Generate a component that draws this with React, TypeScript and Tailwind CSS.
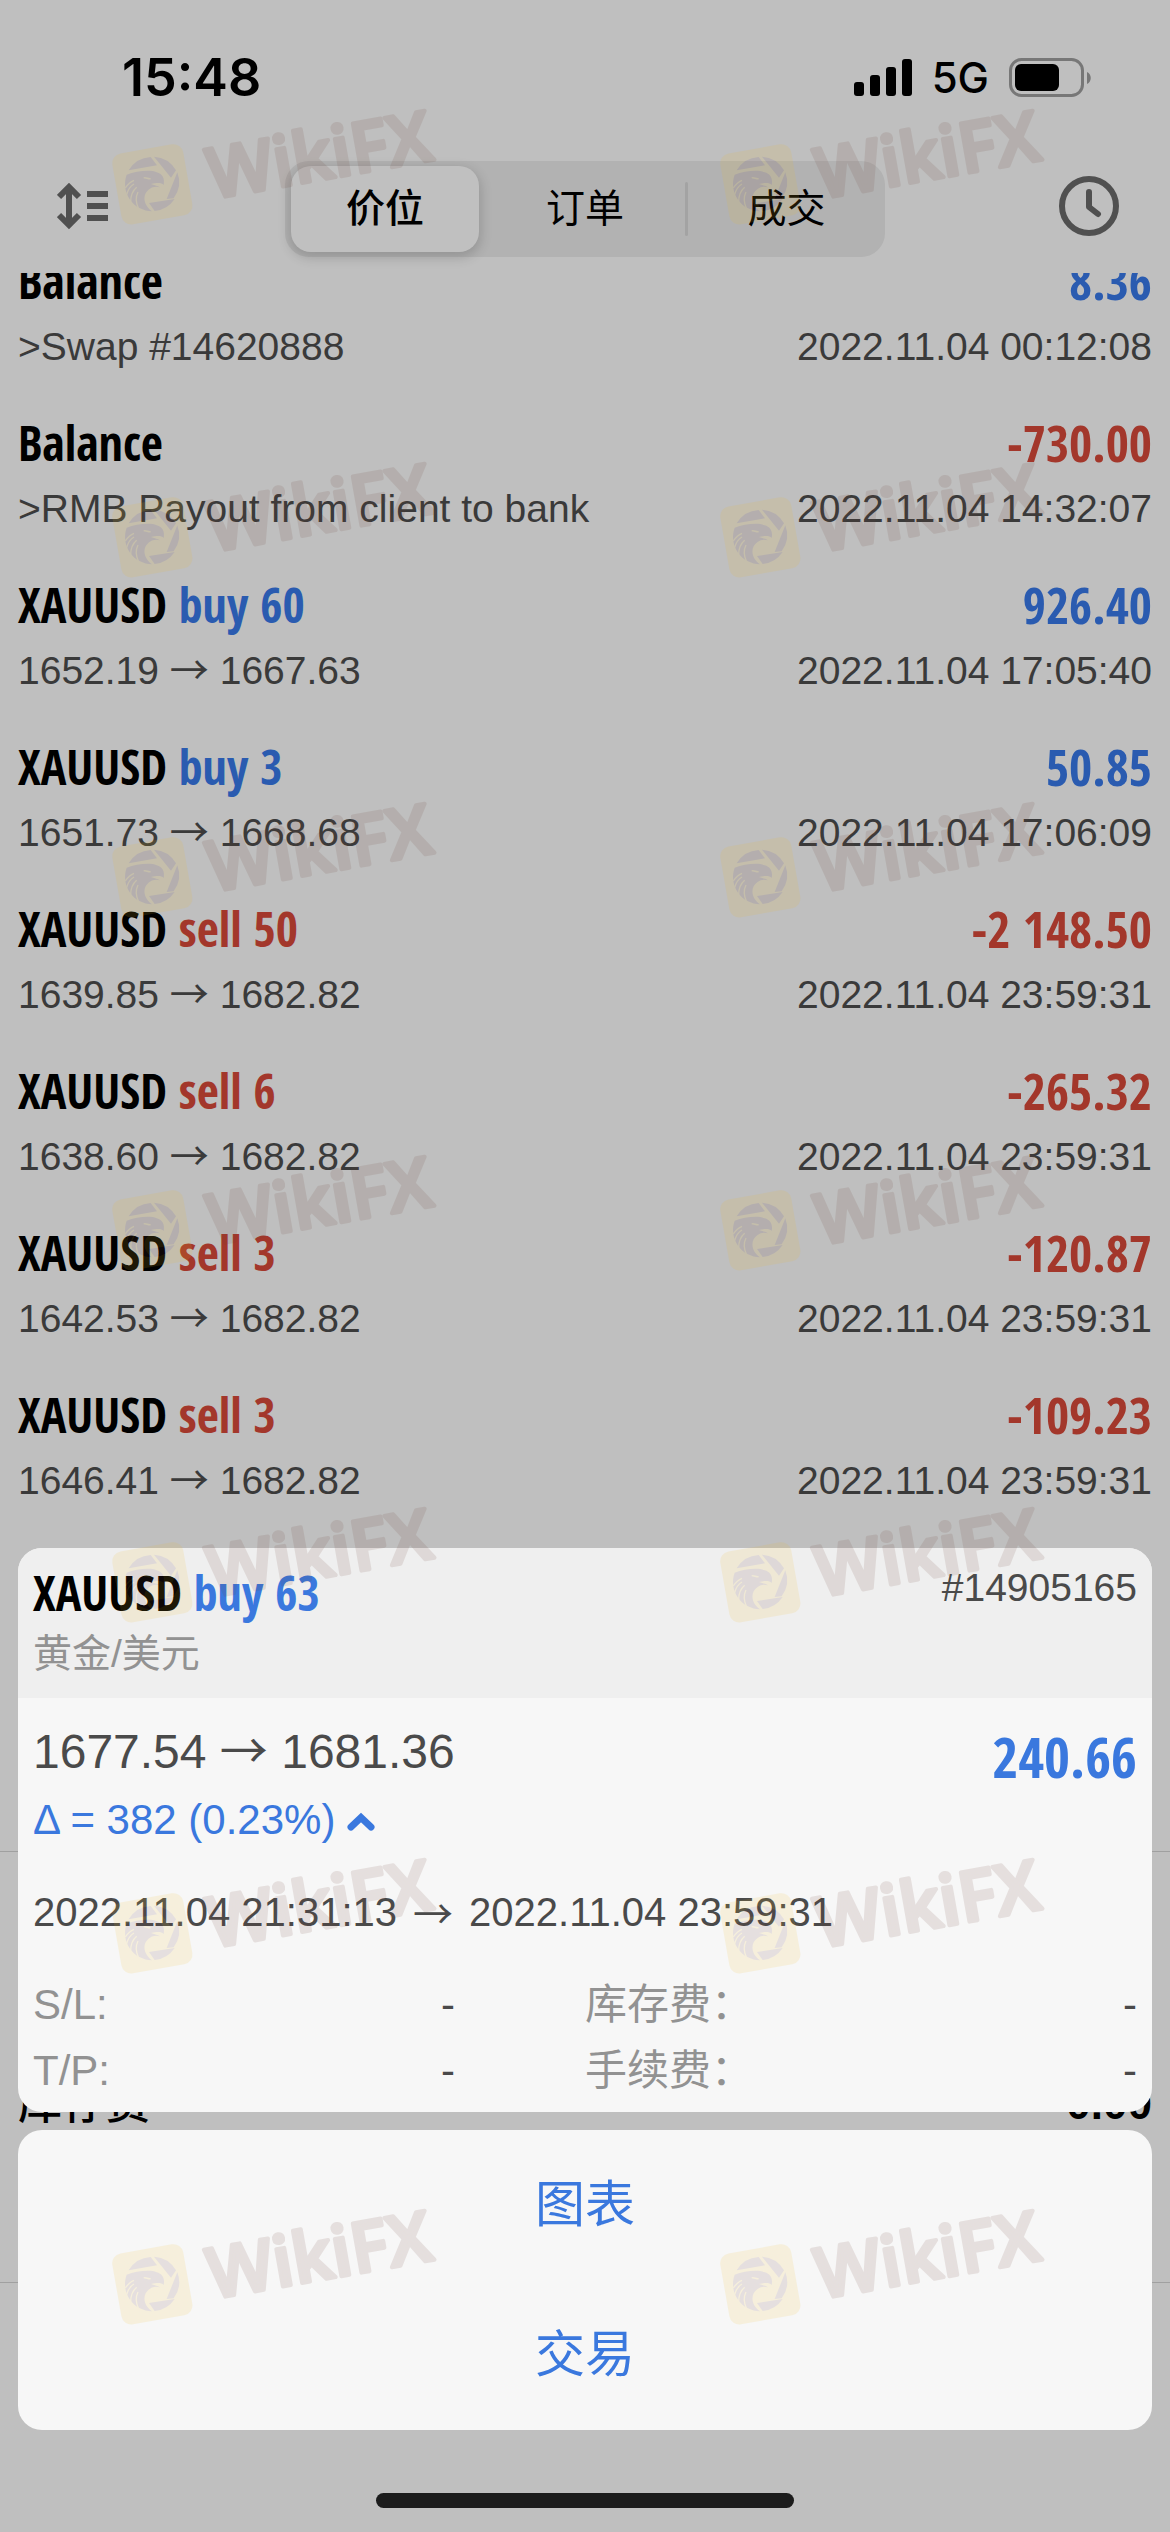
import clsx from "clsx";

type Tone = "blue" | "red";

interface Deal {
  symbol: string;
  action?: string;
  amount: string;
  tone: Tone;
  comment?: string;
  prices?: [string, string];
  time: string;
}

const deals: Deal[] = [
  { symbol: "Balance", amount: "8.36", tone: "blue", comment: ">Swap #14620888", time: "2022.11.04 00:12:08" },
  { symbol: "Balance", amount: "-730.00", tone: "red", comment: ">RMB Payout from client to bank", time: "2022.11.04 14:32:07" },
  { symbol: "XAUUSD", action: "buy 60", amount: "926.40", tone: "blue", prices: ["1652.19", "1667.63"], time: "2022.11.04 17:05:40" },
  { symbol: "XAUUSD", action: "buy 3", amount: "50.85", tone: "blue", prices: ["1651.73", "1668.68"], time: "2022.11.04 17:06:09" },
  { symbol: "XAUUSD", action: "sell 50", amount: "-2 148.50", tone: "red", prices: ["1639.85", "1682.82"], time: "2022.11.04 23:59:31" },
  { symbol: "XAUUSD", action: "sell 6", amount: "-265.32", tone: "red", prices: ["1638.60", "1682.82"], time: "2022.11.04 23:59:31" },
  { symbol: "XAUUSD", action: "sell 3", amount: "-120.87", tone: "red", prices: ["1642.53", "1682.82"], time: "2022.11.04 23:59:31" },
  { symbol: "XAUUSD", action: "sell 3", amount: "-109.23", tone: "red", prices: ["1646.41", "1682.82"], time: "2022.11.04 23:59:31" },
];

const toneClass: Record<Tone, string> = {
  blue: "text-[#2a5bb0]",
  red: "text-[#a3372b]",
};

const tabs = ["价位", "订单", "成交"];

// positions of the repeated brand mark
const markRows = [
  "top-[100px]",
  "top-[453px]",
  "top-[793px]",
  "top-[1146px]",
  "top-[1498px]",
  "top-[1849px]",
  "top-[2200px]",
];
const markCols = ["left-[100px]", "left-[708px]"];

function StatusBar() {
  return (
    <div className="flex h-11 items-center justify-between pr-[78px] pl-[122px] text-black">
      <span className="font-['Inter',sans-serif] text-[52px] leading-none font-semibold">15:48</span>
      <div className="flex items-center">
        <svg className="h-[38px] w-[58px]" viewBox="0 0 58 38" aria-hidden="true">
          <rect x="0" y="23" width="10" height="14" rx="3" />
          <rect x="16" y="16" width="10" height="21" rx="3" />
          <rect x="32" y="8" width="10" height="29" rx="3" />
          <rect x="48" y="0" width="10" height="37" rx="3" />
        </svg>
        <span className="ml-5 font-['Inter',sans-serif] text-[42px] leading-none font-medium">5G</span>
        <svg className="ml-5 h-10 w-[83px]" viewBox="0 0 83 40" aria-hidden="true">
          <rect x="1.5" y="1.5" width="72" height="36" rx="11" fill="none" stroke="#777" strokeWidth="3" />
          <rect x="6" y="6" width="44" height="27" rx="6" />
          <path d="M78 14c5 2 5 10 0 12z" fill="#777" />
        </svg>
      </div>
    </div>
  );
}

function NavBar() {
  return (
    <nav className="mt-[61px] flex h-24 items-start justify-between px-[51px]">
      <button type="button" aria-label="Sort" className="flex h-[90px] w-[66px] items-center pl-1.5">
        <svg className="h-12 w-[52px]" viewBox="0 0 52 48" fill="none" stroke="#505050" strokeWidth="6" aria-hidden="true">
          <path d="M12 5v38M2 15l10-10 10 10M2 33l10 10 10-10" />
          <path d="M30 12H51M30 24H51M30 36H51" />
        </svg>
      </button>

      <div role="tablist" className="grid h-24 w-[600px] grid-cols-3 items-center rounded-3xl bg-[#b2b2b2] text-[39px]">
        {tabs.map((tab, index) => (
          <div key={tab} className="flex items-center">
            {index === 2 && <span className="h-[54px] w-[3px] rounded-full bg-[#a3a3a3]" />}
            <button
              type="button"
              role="tab"
              aria-selected={index === 0}
              className={clsx(
                "h-[86px] flex-1 rounded-[20px]",
                index === 0 ? "mx-1.5 bg-[#c0c0c0] font-medium shadow-[0_4px_12px_2px_rgba(0,0,0,0.16)]" : "font-normal"
              )}
            >
              {tab}
            </button>
          </div>
        ))}
      </div>

      <button type="button" aria-label="History" className="flex h-[90px] w-[66px] items-center justify-end">
        <svg className="size-[60px]" viewBox="0 0 60 60" fill="none" stroke="#505050" strokeWidth="6" aria-hidden="true">
          <circle cx="30" cy="30" r="27" />
          <path d="M30 16v15l9 7" strokeLinecap="round" strokeLinejoin="round" />
        </svg>
      </button>
    </nav>
  );
}

function Arrow() {
  return <span className="font-['Noto_Sans_CJK_SC',sans-serif] leading-none">→</span>;
}

function DealRow({ deal }: { deal: Deal }) {
  return (
    <li className="flex h-[162px] flex-col">
      <div className="flex justify-between font-['Open_Sans_Condensed','Open_Sans',sans-serif] leading-14 font-bold">
        <p className="text-[48px]">
          {deal.symbol} {deal.action && <span className={toneClass[deal.tone]}>{deal.action}</span>}
        </p>
        <p className={clsx("text-[50px]", toneClass[deal.tone])}>{deal.amount}</p>
      </div>
      <div className="mt-3.5 flex justify-between text-[39px] leading-12 text-[#3a3a3a]">
        {deal.prices ? (
          <p>
            {deal.prices[0]} <Arrow /> {deal.prices[1]}
          </p>
        ) : (
          <p>{deal.comment}</p>
        )}
        <p>{deal.time}</p>
      </div>
    </li>
  );
}

function Field({ label }: { label: string }) {
  return (
    <div className="flex justify-between">
      <dt className="text-[#929292]">{label}</dt>
      <dd className="text-[#4a4a4a]">-</dd>
    </div>
  );
}

function DealCard() {
  return (
    <section className="overflow-hidden rounded-3xl bg-[#f7f7f7]">
      <header className="flex h-[150px] items-start justify-between bg-[#efefef] px-[15px] pt-4">
        <div>
          <h2 className="font-['Open_Sans_Condensed','Open_Sans',sans-serif] text-[48px] leading-[58px] font-bold text-black">
            XAUUSD <span className="text-[#3a78de]">buy 63</span>
          </h2>
          <p className="mt-1 text-[39px] leading-14 text-[#929292]">黄金/美元</p>
        </div>
        <p className="text-[39px] leading-12 text-[#4a4a4a]">#14905165</p>
      </header>

      <div className="px-[15px] pb-2">
        <div className="flex justify-between pt-[22px]">
          <p className="text-[48px] leading-16 text-[#4a4a4a]">
            1677.54 <Arrow /> 1681.36
          </p>
          <p className="font-['Open_Sans_Condensed','Open_Sans',sans-serif] text-[56px] leading-[72px] font-bold text-[#3a78de]">
            240.66
          </p>
        </div>
        <button type="button" className="flex items-center text-[42px] leading-14 text-[#3a78de]">
          Δ = 382 (0.23%)
          <svg className="mt-1 ml-3 h-5 w-7" viewBox="0 0 28 20" fill="none" stroke="currentColor" strokeWidth="7" aria-hidden="true">
            <path d="M4 15 14 5.500l10 9.500" strokeLinecap="round" />
          </svg>
        </button>
        <p className="mt-10 flex gap-4 text-[40px] leading-12 text-[#4a4a4a]">
          <span>2022.11.04 21:31:13</span>
          <span className="font-['Noto_Sans_CJK_SC',sans-serif]">→</span>
          <span>2022.11.04 23:59:31</span>
        </p>
        <dl className="mt-9 grid grid-cols-[422px_1fr] gap-x-[130px] text-[42px] leading-[66px]">
          <Field label="S/L:" />
          <Field label="库存费：" />
          <Field label="T/P:" />
          <Field label="手续费：" />
        </dl>
      </div>
    </section>
  );
}

function BrandMark({ className }: { className: string }) {
  return (
    <svg className={clsx("absolute h-[150px] w-[360px] overflow-visible opacity-[0.125]", className)} viewBox="0 0 360 150">
      <g transform="translate(0 30) scale(0.3333)">
        <rect x="49" y="55" width="216" height="216" rx="30" fill="#f0be28" transform="rotate(-10 157 163)" />
        <g fill="#6f3f40">
          <path d="M86 121A82 82 0 0 1 152 81L171 106Z" />
          <path d="M162 80A82 82 0 0 1 228 121L213 143Z" />
          <path d="M232 127A82 82 0 0 1 221 205L200 207Z" />
          <path d="M147 219L224 207A82 82 0 0 1 164 243Z" />
          <path d="M80 134C108 124 150 118 170 127C188 132 195 146 191 165C184 157 172 158 153 162C162 166 172 166 180 172C160 166 146 176 137 190C128 208 136 230 156 244A82 82 0 0 1 80 134Z" />
        </g>
        <g fill="none" stroke="#f0be28" strokeWidth="4">
          <path d="M76 174C84 162 92 155 102 151" />
          <path d="M80 194C84 178 92 168 102 162" />
          <path d="M92 216C92 196 98 182 110 172" />
          <path d="M115 234C106 214 108 198 114 186" />
          <path d="M131 144c6-3 14 4 21 2" />
        </g>
      </g>
      <text
        transform="translate(112 99) rotate(-10)"
        fill="#6f4236"
        stroke="#6f4236"
        strokeWidth="4"
        strokeLinejoin="round"
        className="font-['Open_Sans',sans-serif] text-[70px] font-semibold"
      >
        WikiFX
      </text>
    </svg>
  );
}

export default function App() {
  return (
    <div className="relative min-h-screen overflow-hidden bg-[#bfbfbf] font-['Liberation_Sans','Noto_Sans_CJK_SC',sans-serif] text-black">
      <header className="pt-14 pb-4">
        <StatusBar />
        <NavBar />
      </header>

      <main>
        <div className="overflow-hidden px-[18px]">
          <ul className="-mt-5">
            {deals.map((deal, index) => (
              <DealRow key={index} deal={deal} />
            ))}
          </ul>
        </div>
        <section className="mt-[302px] flex h-[432px] items-start justify-between border-y border-[#a0a0a0] px-[18px] pt-[222px] text-[44px] leading-[60px] font-bold">
          <p className="font-medium">库存费</p>
          <p>0.00</p>
        </section>
      </main>

      {/* Deal details and actions over the history list */}
      <div className="absolute inset-x-0 bottom-0 flex flex-col px-[18px] pb-6">
        <DealCard />
        <div className="mt-[18px] flex flex-col rounded-3xl bg-[#f7f7f7] text-[50px] text-[#3a78de]">
          <button type="button" className="h-[150px]">图表</button>
          <button type="button" className="h-[150px]">交易</button>
        </div>
        <div className="mx-auto mt-[63px] h-[15px] w-[418px] rounded-full bg-[#1c1c1c]" />
      </div>

      <div className="pointer-events-none absolute inset-0" aria-hidden="true">
        {markRows.map((row) => markCols.map((col) => <BrandMark key={row + col} className={clsx(row, col)} />))}
      </div>
    </div>
  );
}
